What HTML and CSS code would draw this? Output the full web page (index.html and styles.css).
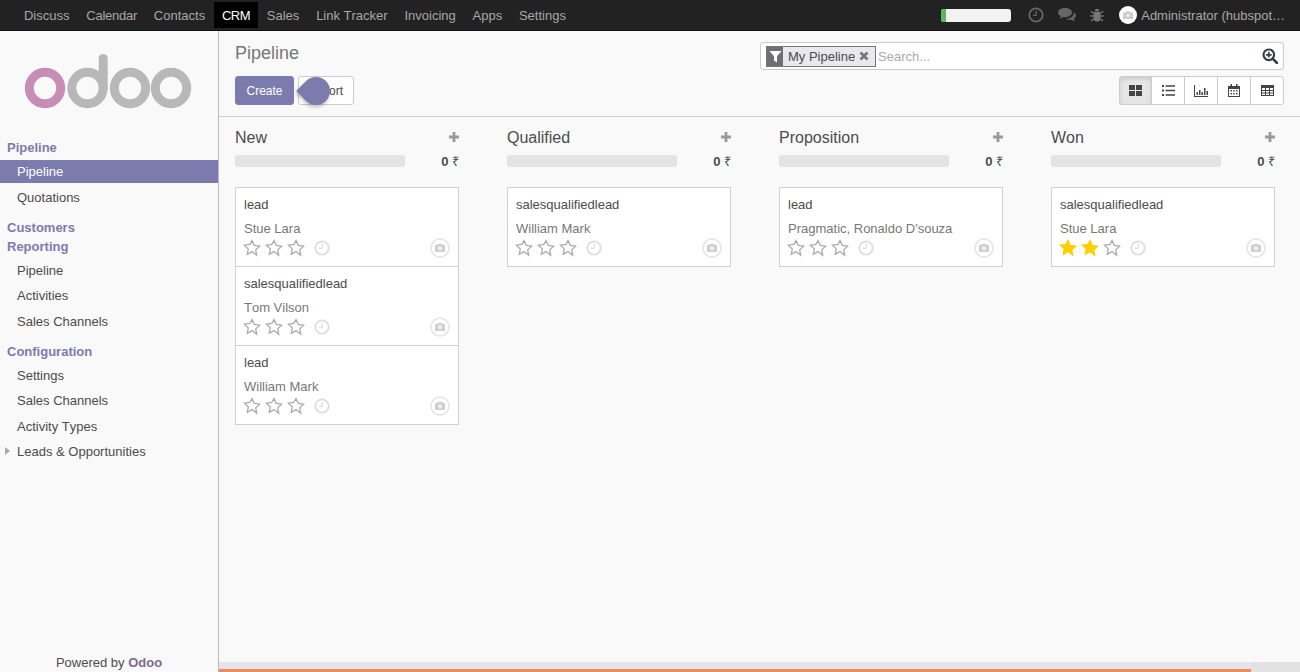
FILE: index.html
```html
<!DOCTYPE html>
<html lang="en">
<head>
    <meta charset="UTF-8">
    <title>Pipeline - Odoo</title>
    <link rel="stylesheet" href="styles.css">
</head>
<body>
    <svg class="defs" width="0" height="0">
        <symbol id="star" viewBox="0 0 18 18"><path d="M9 1.6l2.3 4.9 5.3.7-3.9 3.7 1 5.3L9 12.6l-4.7 2.6 1-5.3-3.9-3.7 5.3-.7z"/></symbol>
        <symbol id="clock" viewBox="0 0 16 16"><circle cx="8" cy="8" r="6.7" fill="none" stroke="currentColor" stroke-width="1.8"/><path d="M8.2 3.8v4.6H5" fill="none" stroke="currentColor" stroke-width="1.2"/></symbol>
        <symbol id="camera" viewBox="0 0 20 20"><circle cx="10" cy="10" r="9" fill="#fff" stroke="#e4e4e4" stroke-width="1.5"/><path d="M5 7h2.2l1-1.3h3.6l1 1.3H15v7H5z" fill="#cfcfcf"/><circle cx="10" cy="10.3" r="2.2" fill="#eee"/></symbol>
        <symbol id="plus" viewBox="0 0 10 10"><path d="M3.6 0h2.8v3.6H10v2.8H6.4V10H3.6V6.4H0V3.6h3.6z"/></symbol>
    </svg>

    <nav class="topbar">
        <div class="topbar-menu">
            <a>Discuss</a>
            <a class="tight">Calendar</a>
            <a>Contacts</a>
            <a class="active">CRM</a>
            <a>Sales</a>
            <a>Link Tracker</a>
            <a>Invoicing</a>
            <a>Apps</a>
            <a>Settings</a>
        </div>
        <div class="systray">
            <div class="db-progress"><span class="db-progress-fill"></span></div>
            <svg class="tray-clock" width="16" height="16"><use href="#clock"/></svg>
            <svg class="tray-chat" width="18" height="14" viewBox="0 0 18 14"><path d="M7 0c3.9 0 7 2 7 4.6S10.900 9.200 7 9.200c-.7 0-1.300-.1-1.900-.2C4.100 9.800 3 10.300 1.500 10.500c.7-.7 1.200-1.500 1.300-2.400C1.100 7.300 0 6 0 4.600 0 2 3.100 0 7 0z"/><path d="M15.200 4.200C16.900 5 18 6.200 18 7.600c0 1.300-.8 2.400-2.200 3.200.1.900.5 1.700 1.200 2.400-1.400-.2-2.500-.7-3.500-1.500-.5.1-1 .1-1.500.1-1.500 0-2.900-.3-4-.9 4.300 0 7.700-2.300 7.700-5.300 0-.5-.2-.9-.5-1.400z"/></svg>
            <svg class="tray-bug" width="14" height="14" viewBox="0 0 14 14"><path d="M4.500 3.200C4.700 1.700 5.700.8 7 .8s2.300.9 2.500 2.400zM3.700 4h6.600v8c-.8 1-2 1.600-3.300 1.600S4.500 13 3.700 12z"/><path d="M.8 3.200l3 2.300M13.200 3.200l-3 2.300M.3 8H4M13.700 8H10M1 13l3-2.500M13 13l-3-2.500" stroke="currentColor" stroke-width="1.300" fill="none"/></svg>
            <span class="tray-avatar"><svg width="10" height="8" viewBox="0 0 10 8"><path d="M0 1.500h2.200l.8-1.200h4l.8 1.200H10V8H0z" fill="#ccc"/><circle cx="5" cy="4.500" r="1.700" fill="#eee"/></svg></span>
            <span class="tray-user">Administrator (hubspot…</span>
        </div>
    </nav>

    <div class="main">
        <aside class="sidebar">
            <div class="logo">
                <svg width="218" height="106" viewBox="0 0 218 106">
                    <circle cx="45" cy="57" r="15.700" fill="none" stroke="#c88db5" stroke-width="9"/>
                    <g fill="none" stroke="#b8b8b8" stroke-width="9">
                        <circle cx="87.500" cy="57" r="15.700"/>
                        <path d="M103.200 57V27.500" stroke-linecap="round"/>
                        <circle cx="130" cy="57" r="15.700"/>
                        <circle cx="171" cy="57" r="15.700"/>
                    </g>
                </svg>
            </div>
            <div class="menu-heading">Pipeline</div>
            <a class="menu-item selected">Pipeline</a>
            <a class="menu-item">Quotations</a>
            <div class="menu-heading spaced no-items">Customers</div>
            <div class="menu-heading">Reporting</div>
            <a class="menu-item">Pipeline</a>
            <a class="menu-item">Activities</a>
            <a class="menu-item">Sales Channels</a>
            <div class="menu-heading spaced">Configuration</div>
            <a class="menu-item">Settings</a>
            <a class="menu-item">Sales Channels</a>
            <a class="menu-item">Activity Types</a>
            <a class="menu-item has-children">Leads &amp; Opportunities</a>
            <div class="powered">Powered by <b>Odoo</b></div>
        </aside>

        <div class="content">
            <header class="control-panel">
                <div class="cp-left">
                    <h1>Pipeline</h1>
                    <div class="cp-buttons">
                        <button class="btn btn-primary">Create</button>
                        <button class="btn">Import</button>
                        <span class="tour-tip"></span>
                    </div>
                </div>
                <div class="cp-right">
                    <div class="searchbox">
                        <div class="facet">
                            <span class="facet-icon"><svg width="13" height="13" viewBox="0 0 13 13"><path d="M.5 1h12L8 6.200V12.500L5 10.500V6.200z" fill="#fff"/></svg></span>
                            <span class="facet-label">My Pipeline</span>
                            <svg class="facet-close" width="10" height="10" viewBox="0 0 10 10"><path d="M1.500 1.500l7 7M8.500 1.500l-7 7" stroke="#777" stroke-width="2.800"/></svg>
                        </div>
                        <span class="search-placeholder">Search...</span>
                        <svg class="search-icon" width="16" height="16" viewBox="0 0 16 16"><circle cx="6.800" cy="6.800" r="5.300" fill="none" stroke="#333f4d" stroke-width="2.200"/><path d="M10.700 10.700L15 15" stroke="#333f4d" stroke-width="2.600" stroke-linecap="round"/><path d="M6.800 4v5.600M4 6.800h5.600" stroke="#333f4d" stroke-width="1.700"/></svg>
                    </div>
                    <div class="view-switch">
                        <button class="view-btn active"><svg width="13" height="11" viewBox="0 0 13 11"><path d="M0 0h6v5H0zM7 0h6v5H7zM0 6h6v5H0zM7 6h6v5H7z"/></svg></button>
                        <button class="view-btn"><svg width="13" height="11" viewBox="0 0 13 11"><path d="M0 0h2v2H0zM3.500 .2H13v1.600H3.500zM0 4.500h2v2H0zM3.500 4.700H13v1.600H3.500zM0 9h2v2H0zM3.500 9.200H13v1.600H3.500z"/></svg></button>
                        <button class="view-btn"><svg width="14" height="12" viewBox="0 0 14 12"><path d="M0 0h1v11h13v1H0zM2.500 7H4v3H2.500zM5 5h1.500v5H5zM7.500 7H9v3H7.500zM10 3h1.500v7H10zM12.500 6H14v4h-1.500z"/></svg></button>
                        <button class="view-btn"><svg width="12" height="13" viewBox="0 0 12 13"><path d="M2.500 0h1.500v2H8V0h1.500v2H12v11H0V2h2.500zM1 5v7h10V5zM2.500 6h1.500v1.500H2.500zM5.250 6h1.500v1.500h-1.500zM8 6h1.500v1.500H8zM2.500 9h1.500v1.500H2.500zM5.250 9h1.500v1.500h-1.500zM8 9h1.500v1.500H8z"/></svg></button>
                        <button class="view-btn"><svg width="13" height="11" viewBox="0 0 13 11"><path fill-rule="evenodd" d="M0 0h13v11H0zM1 3v2h3V3zM5 3v2h3V3zM9 3v2h3V3zM1 6v1.500h3V6zM5 6v1.500h3V6zM9 6v1.500h3V6zM1 8.500V10h3V8.500zM5 8.500V10h3V8.500zM9 8.500V10h3V8.500z"/></svg></button>
                    </div>
                </div>
            </header>

            <div class="kanban">
                <section class="column">
                    <div class="column-title"><span>New</span><svg class="add" width="10" height="10"><use href="#plus"/></svg></div>
                    <div class="column-bar"><span class="bar"></span><b>0 <span class="rupee">₹</span></b></div>
                    <div class="cards">
                        <article class="card">
                            <div class="card-title">lead</div>
                            <div class="card-sub">Stue Lara</div>
                            <div class="card-foot">
                                <svg class="star"><use href="#star"/></svg><svg class="star"><use href="#star"/></svg><svg class="star"><use href="#star"/></svg>
                                <svg class="clock"><use href="#clock"/></svg>
                                <svg class="avatar"><use href="#camera"/></svg>
                            </div>
                        </article>
                        <article class="card">
                            <div class="card-title">salesqualifiedlead</div>
                            <div class="card-sub">Tom Vilson</div>
                            <div class="card-foot">
                                <svg class="star"><use href="#star"/></svg><svg class="star"><use href="#star"/></svg><svg class="star"><use href="#star"/></svg>
                                <svg class="clock"><use href="#clock"/></svg>
                                <svg class="avatar"><use href="#camera"/></svg>
                            </div>
                        </article>
                        <article class="card">
                            <div class="card-title">lead</div>
                            <div class="card-sub">William Mark</div>
                            <div class="card-foot">
                                <svg class="star"><use href="#star"/></svg><svg class="star"><use href="#star"/></svg><svg class="star"><use href="#star"/></svg>
                                <svg class="clock"><use href="#clock"/></svg>
                                <svg class="avatar"><use href="#camera"/></svg>
                            </div>
                        </article>
                    </div>
                </section>

                <section class="column">
                    <div class="column-title"><span>Qualified</span><svg class="add" width="10" height="10"><use href="#plus"/></svg></div>
                    <div class="column-bar"><span class="bar"></span><b>0 <span class="rupee">₹</span></b></div>
                    <div class="cards">
                        <article class="card">
                            <div class="card-title">salesqualifiedlead</div>
                            <div class="card-sub">William Mark</div>
                            <div class="card-foot">
                                <svg class="star"><use href="#star"/></svg><svg class="star"><use href="#star"/></svg><svg class="star"><use href="#star"/></svg>
                                <svg class="clock"><use href="#clock"/></svg>
                                <svg class="avatar"><use href="#camera"/></svg>
                            </div>
                        </article>
                    </div>
                </section>

                <section class="column">
                    <div class="column-title"><span>Proposition</span><svg class="add" width="10" height="10"><use href="#plus"/></svg></div>
                    <div class="column-bar"><span class="bar"></span><b>0 <span class="rupee">₹</span></b></div>
                    <div class="cards">
                        <article class="card">
                            <div class="card-title">lead</div>
                            <div class="card-sub">Pragmatic, Ronaldo D'souza</div>
                            <div class="card-foot">
                                <svg class="star"><use href="#star"/></svg><svg class="star"><use href="#star"/></svg><svg class="star"><use href="#star"/></svg>
                                <svg class="clock"><use href="#clock"/></svg>
                                <svg class="avatar"><use href="#camera"/></svg>
                            </div>
                        </article>
                    </div>
                </section>

                <section class="column">
                    <div class="column-title"><span>Won</span><svg class="add" width="10" height="10"><use href="#plus"/></svg></div>
                    <div class="column-bar"><span class="bar"></span><b>0 <span class="rupee">₹</span></b></div>
                    <div class="cards">
                        <article class="card">
                            <div class="card-title">salesqualifiedlead</div>
                            <div class="card-sub">Stue Lara</div>
                            <div class="card-foot">
                                <svg class="star on"><use href="#star"/></svg><svg class="star on"><use href="#star"/></svg><svg class="star"><use href="#star"/></svg>
                                <svg class="clock"><use href="#clock"/></svg>
                                <svg class="avatar"><use href="#camera"/></svg>
                            </div>
                        </article>
                    </div>
                </section>
            </div>

            <div class="scroll-track"><div class="scroll-fill"></div></div>
        </div>
    </div>
</body>
</html>
```
FILE: styles.css
```css
html, body {
    height: 100%;
}
body {
    margin: 0;
    height: 672px;
    overflow: hidden;
    display: flex;
    flex-direction: column;
    font-family: "Liberation Sans", Arial, sans-serif;
    font-size: 13px;
    font-kerning: none;
    color: #4c4c4c;
    background-color: #f9f9f9;
}
.defs {
    position: absolute;
}

/* top bar */
.topbar {
    height: 31px;
    flex: none;
    box-sizing: border-box;
    display: flex;
    justify-content: space-between;
    align-items: center;
    padding: 0 15px 0 15.600px;
    background-color: #222;
    border-bottom: 1px solid #111;
}
.topbar-menu {
    display: flex;
    align-items: center;
}
.topbar-menu a {
    height: 26px;
    line-height: 27px;
    padding: 0 8.400px;
    color: #a8a8a8;
}
.topbar-menu a.tight {
    letter-spacing: -0.250px;
}
.topbar-menu a.active {
    letter-spacing: -0.500px;
    background-color: #000;
    color: #fff;
}
.systray {
    display: flex;
    align-items: center;
    color: #666;
}
.db-progress {
    width: 70px;
    height: 13px;
    border-radius: 3px;
    overflow: hidden;
    background-color: #f2f2f2;
    margin-right: 17px;
}
.db-progress-fill {
    display: block;
    width: 5px;
    height: 100%;
    background-color: #5cb85c;
}
.tray-clock {
    margin-right: 14px;
    color: #666;
}
.tray-chat {
    fill: #666;
    margin-right: 14px;
}
.tray-bug {
    fill: #777;
    color: #777;
    margin-right: 15px;
}
.tray-avatar {
    width: 18px;
    height: 18px;
    border-radius: 50%;
    background-color: #fff;
    display: flex;
    align-items: center;
    justify-content: center;
    margin-right: 4px;
}
.tray-user {
    color: #a8a8a8;
    white-space: nowrap;
}

.main {
    flex: 1;
    display: flex;
    min-height: 0;
}

/* sidebar */
.sidebar {
    width: 219px;
    flex: none;
    box-sizing: border-box;
    display: flex;
    flex-direction: column;
    border-right: 1px solid #bbb;
    background-color: #f9f9f9;
}
.logo {
    height: 107px;
    flex: none;
}
.menu-heading {
    height: 19px;
    line-height: 19px;
    padding-left: 7px;
    margin-bottom: 3px;
    font-weight: bold;
    color: #7c7bad;
}
.menu-heading.spaced {
    margin-top: 6.500px;
}
.menu-heading.no-items {
    margin-bottom: 0;
}
.menu-item {
    height: 23px;
    line-height: 23px;
    margin-bottom: 2.500px;
    padding-left: 17px;
    position: relative;
    color: #4c4c4c;
}
.menu-item.selected {
    background-color: #7c7bad;
    color: #fff;
}
.menu-item.has-children::before {
    content: "";
    position: absolute;
    left: 5px;
    top: 7px;
    border-left: 5px solid #aaa;
    border-top: 4.500px solid transparent;
    border-bottom: 4.500px solid transparent;
}
.powered {
    margin-top: auto;
    height: 20px;
    line-height: 22px;
    text-align: center;
    color: #4c4c4c;
}
.powered b {
    color: #7c6a93;
}

/* control panel */
.content {
    flex: 1;
    min-width: 0;
    display: flex;
    flex-direction: column;
}
.control-panel {
    height: 86px;
    flex: none;
    box-sizing: border-box;
    display: flex;
    justify-content: space-between;
    padding: 0 16px;
    border-bottom: 1px solid #ccc;
}
.cp-left h1 {
    margin: 0;
    height: 45px;
    line-height: 45px;
    font-size: 18px;
    font-weight: normal;
    color: #777;
}
.cp-buttons {
    position: relative;
    display: flex;
    gap: 4px;
}
.btn {
    height: 29px;
    padding: 0 10px;
    font: inherit;
    font-size: 12px;
    color: #4c4c4c;
    background-color: #fff;
    border: 1px solid #ccc;
    border-radius: 3px;
}
.btn-primary {
    width: 59px;
    padding: 0;
    color: #fff;
    background-color: #7c7bad;
    border-color: #7c7bad;
}
.tour-tip {
    position: absolute;
    left: 67px;
    top: 1px;
    width: 28px;
    height: 28px;
    background-color: #7c7bad;
    border-radius: 50% 50% 50% 0;
    transform: rotate(45deg);
    box-shadow: 1px 2px 4px rgba(0, 0, 0, 0.25);
}
.cp-right {
    width: 524px;
    padding-top: 11px;
    display: flex;
    flex-direction: column;
    align-items: flex-end;
}
.searchbox {
    width: 100%;
    height: 28px;
    box-sizing: border-box;
    display: flex;
    align-items: center;
    padding: 0 5px;
    background-color: #fff;
    border: 1px solid #ccc;
    border-radius: 3px;
    margin-bottom: 6px;
}
.facet {
    height: 21px;
    width: 110px;
    flex: none;
    box-sizing: border-box;
    display: flex;
    align-items: center;
    background-color: #e8e8ef;
    border: 1px solid #777;
}
.facet-icon {
    width: 16px;
    height: 100%;
    flex: none;
    display: flex;
    align-items: center;
    justify-content: center;
    background-color: #6f6f71;
}
.facet-label {
    margin-left: 5px;
    color: #4c4c4c;
}
.facet-close {
    margin-left: 4px;
}
.search-placeholder {
    margin-left: 2px;
    color: #aaa;
}
.search-icon {
    margin-left: auto;
}
.view-switch {
    display: flex;
    height: 29px;
}
.view-btn {
    width: 34px;
    height: 29px;
    padding: 0;
    margin-left: -1px;
    display: flex;
    align-items: center;
    justify-content: center;
    background-color: #fff;
    border: 1px solid #ccc;
    fill: #444;
}
.view-btn:first-child {
    margin-left: 0;
    width: 33px;
    border-radius: 3px 0 0 3px;
}
.view-btn:last-child {
    border-radius: 0 3px 3px 0;
}
.view-btn.active {
    background-color: #e6e6e6;
    box-shadow: inset 0 2px 4px rgba(0, 0, 0, 0.12);
}

/* kanban */
.kanban {
    flex: 1;
    min-height: 0;
    display: flex;
    gap: 48px;
    padding: 0 16px;
}
.column {
    width: 224px;
    flex: none;
}
.column-title {
    height: 42px;
    padding-top: 10px;
    box-sizing: border-box;
    display: flex;
    justify-content: space-between;
    line-height: 21px;
    font-size: 16px;
    color: #4c4c4c;
}
.add {
    fill: #999;
    margin-top: 5px;
}
.column-bar {
    height: 12px;
    display: flex;
    align-items: center;
    justify-content: space-between;
    margin-bottom: 20px;
    margin-top: -4px;
}
.column-bar b {
    color: #4c4c4c;
    font-size: 13px;
}
.rupee {
    font-weight: normal;
}
.bar {
    width: 170px;
    height: 12px;
    border-radius: 3px;
    background-color: #e4e4e4;
}
.card {
    height: 80px;
    margin-top: -1px;
    box-sizing: border-box;
    padding: 8px 8px 0 8px;
    background-color: #fff;
    border: 1px solid #d0d0d0;
}
.card:first-child {
    margin-top: 0;
}
.card-title {
    height: 17px;
    line-height: 17px;
    color: #4c4c4c;
}
.card-sub {
    height: 17px;
    line-height: 17px;
    margin-top: 7px;
    color: #777;
}
.card-foot {
    height: 20px;
    display: flex;
    align-items: center;
    margin-top: 1px;
    margin-left: -1px;
}
.star {
    width: 18px;
    height: 18px;
    margin-right: 4px;
    fill: #fff;
    stroke: #aaa;
    stroke-width: 1.300px;
}
.star.on {
    fill: #fbd000;
    stroke: #fbd000;
}
.clock {
    width: 16px;
    height: 16px;
    margin-left: 5px;
    color: #ddd;
}
.avatar {
    width: 20px;
    height: 20px;
    margin-left: auto;
}

.scroll-track {
    height: 10px;
    flex: none;
    background-color: #e2e2e2;
}
.scroll-fill {
    width: 1032px;
    height: 100%;
    box-sizing: border-box;
    background-color: #e6e4ea;
    border-bottom: 3px solid #ee8a60;
}
```
